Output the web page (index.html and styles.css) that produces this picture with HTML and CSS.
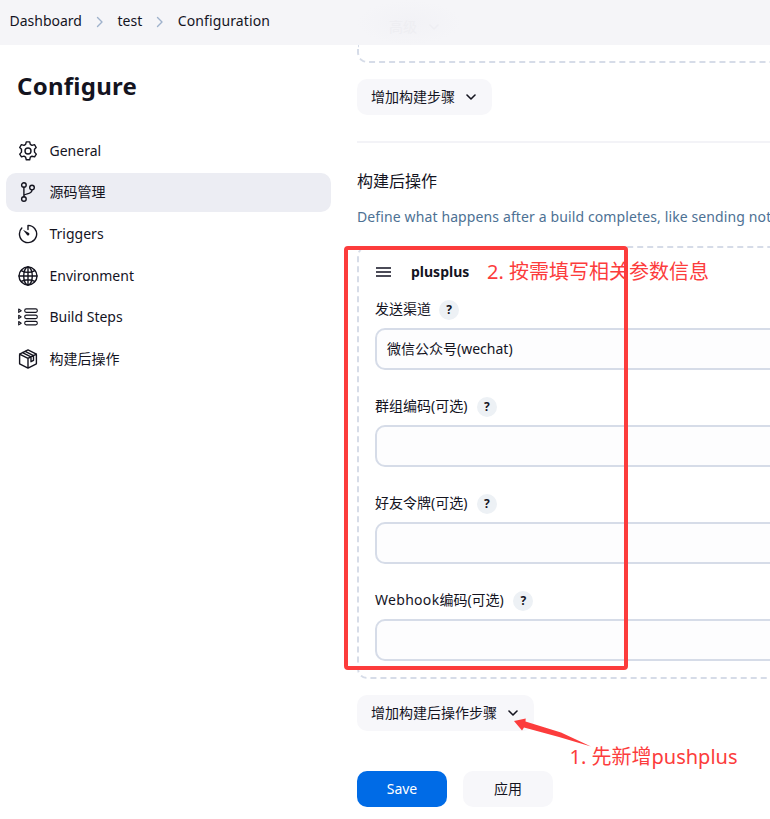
FILE: index.html
```html
<!DOCTYPE html>
<html lang="zh-CN">
<head>
<meta charset="utf-8">
<title>test Config</title>
<link rel="stylesheet" href="styles.css">
</head>
<body>
<header class="topbar">
  <nav class="crumbs">
    <span class="crumb-dashboard">Dashboard</span>
    <svg class="sep" viewBox="0 0 8 12"><path d="M1.500 1.500 6 6l-4.500 4.500"/></svg>
    <span class="crumb-test">test</span>
    <svg class="sep" viewBox="0 0 8 12"><path d="M1.500 1.500 6 6l-4.500 4.500"/></svg>
    <span class="crumb-config">Configuration</span>
  </nav>
  <div class="ghost"><span>高级</span><svg class="chev" viewBox="0 0 10 6"><path d="M1 1l4 4 4-4"/></svg></div>
</header>
<div class="layout">
  <aside class="sidebar">
    <h1>Configure</h1>
    <nav class="tasks">
      <a class="task"><svg viewBox="0 0 20 20"><path d="M8.300 .9h3.400l.6 2.500 1.700 1 2.500-.8 1.700 2.900-1.700 1.800v2.800l1.800 2-1.700 2.800-2.600-.7-1.700 1-.6 2.600H8.300l-.7-2.600-1.600-1-2.500.7-1.800-2.800 1.800-2V8.300L1.700 6.500l1.700-2.900 2.600.8 1.600-1z"/><circle cx="10" cy="10" r="3"/></svg><span>General</span></a>
      <a class="task selected"><svg viewBox="0 0 20 20"><circle cx="5.900" cy="3" r="2.300"/><circle cx="5.900" cy="17" r="2.300"/><circle cx="14" cy="5.600" r="2.300"/><path d="M5.900 5.300v9.400M5.900 13.500c1-2.500 8.100-.8 8.100-5.600"/></svg><span>源码管理</span></a>
      <a class="task"><svg viewBox="0 0 20 20"><path d="M10 5.500V1.400a8.600 8.600 0 1 1-6.200 2.700"/><path class="fill" d="M5 5.700l6 3.300a1.400 1.400 0 1 1-2 2z"/></svg><span>Triggers</span></a>
      <a class="task"><svg viewBox="0 0 20 20"><circle cx="10" cy="10" r="9"/><ellipse cx="10" cy="10" rx="4.300" ry="9"/><path d="M10 1v18M1 10h18M3.300 4.600c3.600 2.300 9.800 2.300 13.400 0M3.300 15.400c3.600-2.300 9.800-2.300 13.400 0"/></svg><span>Environment</span></a>
      <a class="task"><svg class="thin" viewBox="0 0 20 20"><rect x="6.700" y="1.900" width="12.600" height="3.500" rx="1.600"/><rect x="6.700" y="8.100" width="12.600" height="3.500" rx="1.600"/><rect x="6.700" y="14.400" width="12.600" height="3.500" rx="1.600"/><path d="M.7 2l2.500 1.700L.7 5.400zM.7 8.200l2.500 1.700-2.500 1.700zM.7 14.500l2.500 1.700-2.500 1.700z"/></svg><span>Build Steps</span></a>
      <a class="task"><svg viewBox="0 0 20 20"><path d="M10 .9l8.400 4.200v9.700L10 19.100l-8.400-4.300V5.100zM1.600 5.100L10 9.300l8.400-4.200M10 9.300v9.800M4.500 3.600l8.500 4.300v4.800l2.500-1.300V6.600L7.200 2.300"/></svg><span>构建后操作</span></a>
    </nav>
  </aside>
  <main class="content">
    <div class="chunk-end"></div>
    <button class="btn add-build"><span>增加构建步骤</span><svg class="chev" viewBox="0 0 10 6"><path d="M1 1l4 4 4-4"/></svg></button>
    <hr>
    <h2>构建后操作</h2>
    <p class="desc">Define what happens after a build completes, like sending not</p>
    <section class="chunk">
      <div class="chunk-head"><i class="drag"></i><b>plusplus</b></div>
      <label>发送渠道<span class="help">?</span></label>
      <div class="field">微信公众号(wechat)</div>
      <label>群组编码(可选)<span class="help wide">?</span></label>
      <div class="field"></div>
      <label>好友令牌(可选)<span class="help wide">?</span></label>
      <div class="field"></div>
      <label><span class="hook">Webhook</span>编码(可选)<span class="help wide">?</span></label>
      <div class="field"></div>
    </section>
    <button class="btn add-post"><span>增加构建后操作步骤</span><svg class="chev" viewBox="0 0 10 6"><path d="M1 1l4 4 4-4"/></svg></button>
    <div class="actions"><button class="btn save">Save</button><button class="btn apply">应用</button></div>
  </main>
</div>
<div class="mark-box"></div>
<div class="mark-text mark-two">2. 按需填写相关参数信息</div>
<svg class="mark-arrow" viewBox="0 0 80 30"><path d="M3 4 14.700 1.500 14.500 4.500 50 15.500 80 29.500 48 20 13 10.500 11 13.500z"/></svg>
<div class="mark-text mark-one">1. 先新增<span>pushplus</span></div>
</body>
</html>
```
FILE: styles.css
```css
* { box-sizing: border-box; }
body { margin: 0; width: 770px; height: 819px; overflow: hidden; position: relative; background: #fff; color: #14141f; font: 14px/20px "Noto Sans", "Noto Sans CJK SC", sans-serif; }
svg { display: block; flex: none; fill: none; stroke: currentColor; stroke-width: 1.4; stroke-linejoin: round; stroke-linecap: round; }
.topbar { height: 45px; background: #f5f5f8; display: flex; }
.crumbs { display: flex; align-items: center; width: 357px; height: 41px; padding-left: 9.500px; }
.sep { width: 8px; height: 12px; margin: 2px 13.500px 0 14px; color: #9fb2cc; }
.crumb-config { letter-spacing: .12px; }
.ghost { display: flex; align-items: center; gap: 12px; width: 105px; height: 45px; padding: 8px 0 0 32px; color: #eeeef2; background: radial-gradient(ellipse at center, #f2f2f6, #f5f5f8 70%); }
.chev { width: 10px; height: 6px; stroke-width: 1.600; }
.layout { display: flex; height: 774px; overflow: hidden; }
.sidebar { width: 357px; flex: none; padding: 26px 26px 0 6px; }
h1 { margin: 0 0 28px 11px; font-size: 24px; line-height: 32px; font-weight: 700; letter-spacing: .25px; position: relative; top: -1px; }
.tasks { display: grid; gap: 2.700px; }
.task { display: flex; align-items: center; gap: 11.500px; height: 39px; padding-left: 12px; border-radius: 10px; }
.task svg { width: 20px; height: 20px; }
.task .thin { stroke-width: 1.100; }
.task .fill { fill: currentColor; stroke: none; }
.selected { background: #ecedf3; }
.content { flex: none; width: 900px; }
.chunk-end { height: 18px; border: 2px dashed #d6dce8; border-top: 0; border-radius: 0 0 10px 10px; }
.btn { display: flex; align-items: center; justify-content: center; height: 36px; padding: 0; border: 0; border-radius: 10px; background: #f7f7fa; color: inherit; font: inherit; }
.btn .chev { margin-left: 11px; }
.add-build { width: 135px; margin-top: 16px; padding-right: 2px; }
hr { height: 2px; margin: 26px 0; border: 0; background: #f3f3f7; }
h2 { margin: 0; font-size: 16px; line-height: 24px; font-weight: 400; }
.desc { width: 413px; margin: 14px 0 19px; color: #4d7194; line-height: 20px; white-space: nowrap; letter-spacing: .12px; }
.chunk { height: 433px; border: 2px dashed #d6dce8; border-radius: 10px; padding: 14px 16px 0; }
.chunk-head { display: flex; align-items: center; gap: 20px; height: 20px; margin-bottom: 17px; }
.drag { width: 15px; height: 10px; margin-left: 1px; border: solid #4b4b57; border-width: 2px 0; background: linear-gradient(#4b4b57, #4b4b57) 0 50% / 100% 2px no-repeat; }
label { display: flex; align-items: center; height: 20px; margin-bottom: 9px; }
.help { width: 20px; height: 20px; margin: 2px 0 0 8px; border-radius: 50%; background: #edf1f5; font-size: 12px; line-height: 19px; font-weight: 700; text-align: center; }
.help.wide { margin-left: 9.500px; }
.hook { letter-spacing: .3px; }
.field { height: 42px; margin-bottom: 26px; padding: 9px 10px; border: 2px solid #d6dce8; border-radius: 10px; background: #fdfdfe; }
.add-post { width: 177px; margin-top: 16px; padding-right: 2px; }
.actions { display: flex; gap: 16px; margin-top: 40px; }
.actions .btn { width: 90px; }
.actions .save { background: #006be6; color: #fff; }
.mark-box { position: absolute; left: 344px; top: 246px; width: 284px; height: 424px; border: 4px solid #fc3c3c; border-radius: 4px; }
.mark-text { position: absolute; color: #fc3c3c; font-size: 20px; line-height: 28px; white-space: nowrap; }
.mark-two { left: 487px; top: 258px; }
.mark-one { left: 569.500px; top: 743px; }
.mark-arrow { position: absolute; left: 511px; top: 717px; width: 80px; height: 30px; fill: #fc3c3c; stroke: none; }
```
